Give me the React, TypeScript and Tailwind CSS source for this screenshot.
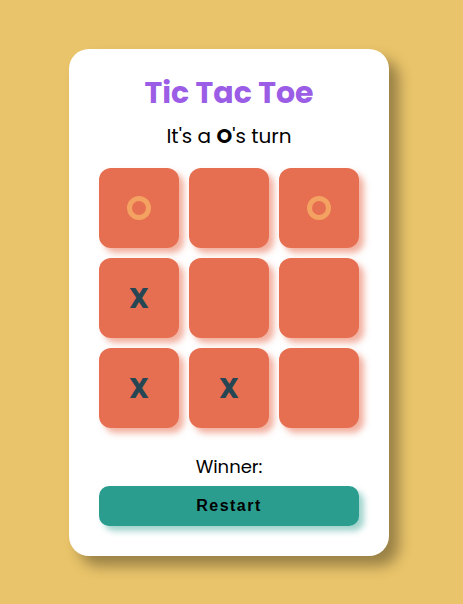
import React from "react";

type Mark = "X" | "O" | "";

const board: Mark[] = ["O", "", "O", "X", "", "", "X", "X", ""];

function Cell({ mark }: { mark: Mark }) {
  return (
    <button className="w-[80px] h-[80px] rounded-[12px] bg-[#e76f51] shadow-[5px_5px_6px_rgba(231,111,81,0.55)] flex items-center justify-center">
      {mark === "O" && (
        <span className="w-[24px] h-[24px] rounded-full border-[5px] border-[#f4a261]" />
      )}
      {mark === "X" && (
        <span className="text-[28px] leading-none font-bold text-[#264653] pt-[2px]">
          X
        </span>
      )}
    </button>
  );
}

export default function App() {
  return (
    <div
      className="min-h-screen w-full bg-[#e9c46a] flex items-center justify-center pr-[5px]"
      style={{ fontFamily: "Poppins, 'Noto Sans', sans-serif" }}
    >
      <div className="w-[320px] h-[507px] bg-white rounded-[20px] shadow-[10px_10px_14px_rgba(0,0,0,0.35)] px-[30px] flex flex-col items-center">
        <h1 className="mt-[22px] text-[30px] font-bold text-[#9b5de5] leading-[44px]">
          Tic Tac Toe
        </h1>
        <p className="mt-[7px] text-[20px] text-black leading-[28px]">
          It's a <b>O</b>'s turn
        </p>

        {/* 3x3 board */}
        <div className="mt-[18px] grid grid-cols-3 gap-[10px]">
          {board.map((m, i) => (
            <Cell key={i} mark={m} />
          ))}
        </div>

        <p className="mt-[26px] text-[18px] text-black leading-[26px]">Winner:</p>
        <button
          className="mt-[6px] w-full h-[40px] rounded-[10px] bg-[#2a9d8f] shadow-[5px_5px_6px_rgba(42,157,143,0.45)] text-[16px] font-bold tracking-[1.5px] text-black"
          style={{ fontFamily: "'Liberation Sans', Arial, sans-serif" }}
        >
          Restart
        </button>
      </div>
    </div>
  );
}
